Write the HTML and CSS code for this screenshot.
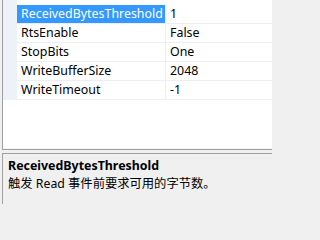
FILE: index.html
```html
<!DOCTYPE html>
<html>
<head>
<meta charset="utf-8">
<link rel="stylesheet" href="styles.css">
</head>
<body>
<div class="frame">
  <div class="grid">
    <div class="rows">
      <div class="row selected"><div class="name">ReceivedBytesThreshold</div><div class="val">1</div></div>
      <div class="row"><div class="name">RtsEnable</div><div class="val">False</div></div>
      <div class="row"><div class="name">StopBits</div><div class="val">One</div></div>
      <div class="row"><div class="name">WriteBufferSize</div><div class="val">2048</div></div>
      <div class="row"><div class="name">WriteTimeout</div><div class="val">-1</div></div>
    </div>
  </div>
  <div class="splitter"></div>
  <div class="doc">
    <div class="doc-title">ReceivedBytesThreshold</div>
    <div class="doc-text">触发 Read 事件前要求可用的字节数。</div>
  </div>
</div>
</body>
</html>
```
FILE: styles.css
```css
html, body {
  margin: 0;
  padding: 0;
  background: #f0f0f0;
  width: 272px;
  height: 204px;
  overflow: hidden;
}
.frame {
  margin-left: 2px;
  height: 204px;
  display: flex;
  flex-direction: column;
  font-family: "Noto Sans", "Noto Sans CJK SC", sans-serif;
  font-size: 12.4px;
  color: #000;
}
.grid {
  height: 150px;
  background: #fff;
  border-left: 1px solid #a0a0a0;
  border-bottom: 1px solid #a0a0a0;
  box-sizing: border-box;
  box-shadow: inset 0 -4px 0 -3px #f4f4f4;
}
.rows {
  padding-top: 5px;
  border-left: 14px solid #eef1f8;
}
.row {
  display: flex;
  height: 19px;
  line-height: 18px;
}
.name {
  width: 148px;
  padding-left: 4px;
  box-sizing: border-box;
  border-bottom: 1px solid #eceef4;
  white-space: nowrap;
  overflow: hidden;
}
.val {
  flex: 1;
  padding-left: 4px;
  border-left: 1px solid #eceef4;
  border-bottom: 1px solid #eceef4;
  white-space: nowrap;
}
.row.selected .name {
  background: #3399ff;
  color: #fff;
}
.splitter {
  height: 3px;
  background: #f0f0f0;
}
.doc {
  flex: 1;
  border-left: 1px solid #a0a0a0;
  border-top: 1px solid #a0a0a0;
  background: #f0f0f0;
  padding: 3px 0 0 5px;
}
.doc-title {
  font-weight: bold;
  line-height: 18px;
}
.doc-text {
  font-size: 12.3px;
  line-height: 18px;
}
```
